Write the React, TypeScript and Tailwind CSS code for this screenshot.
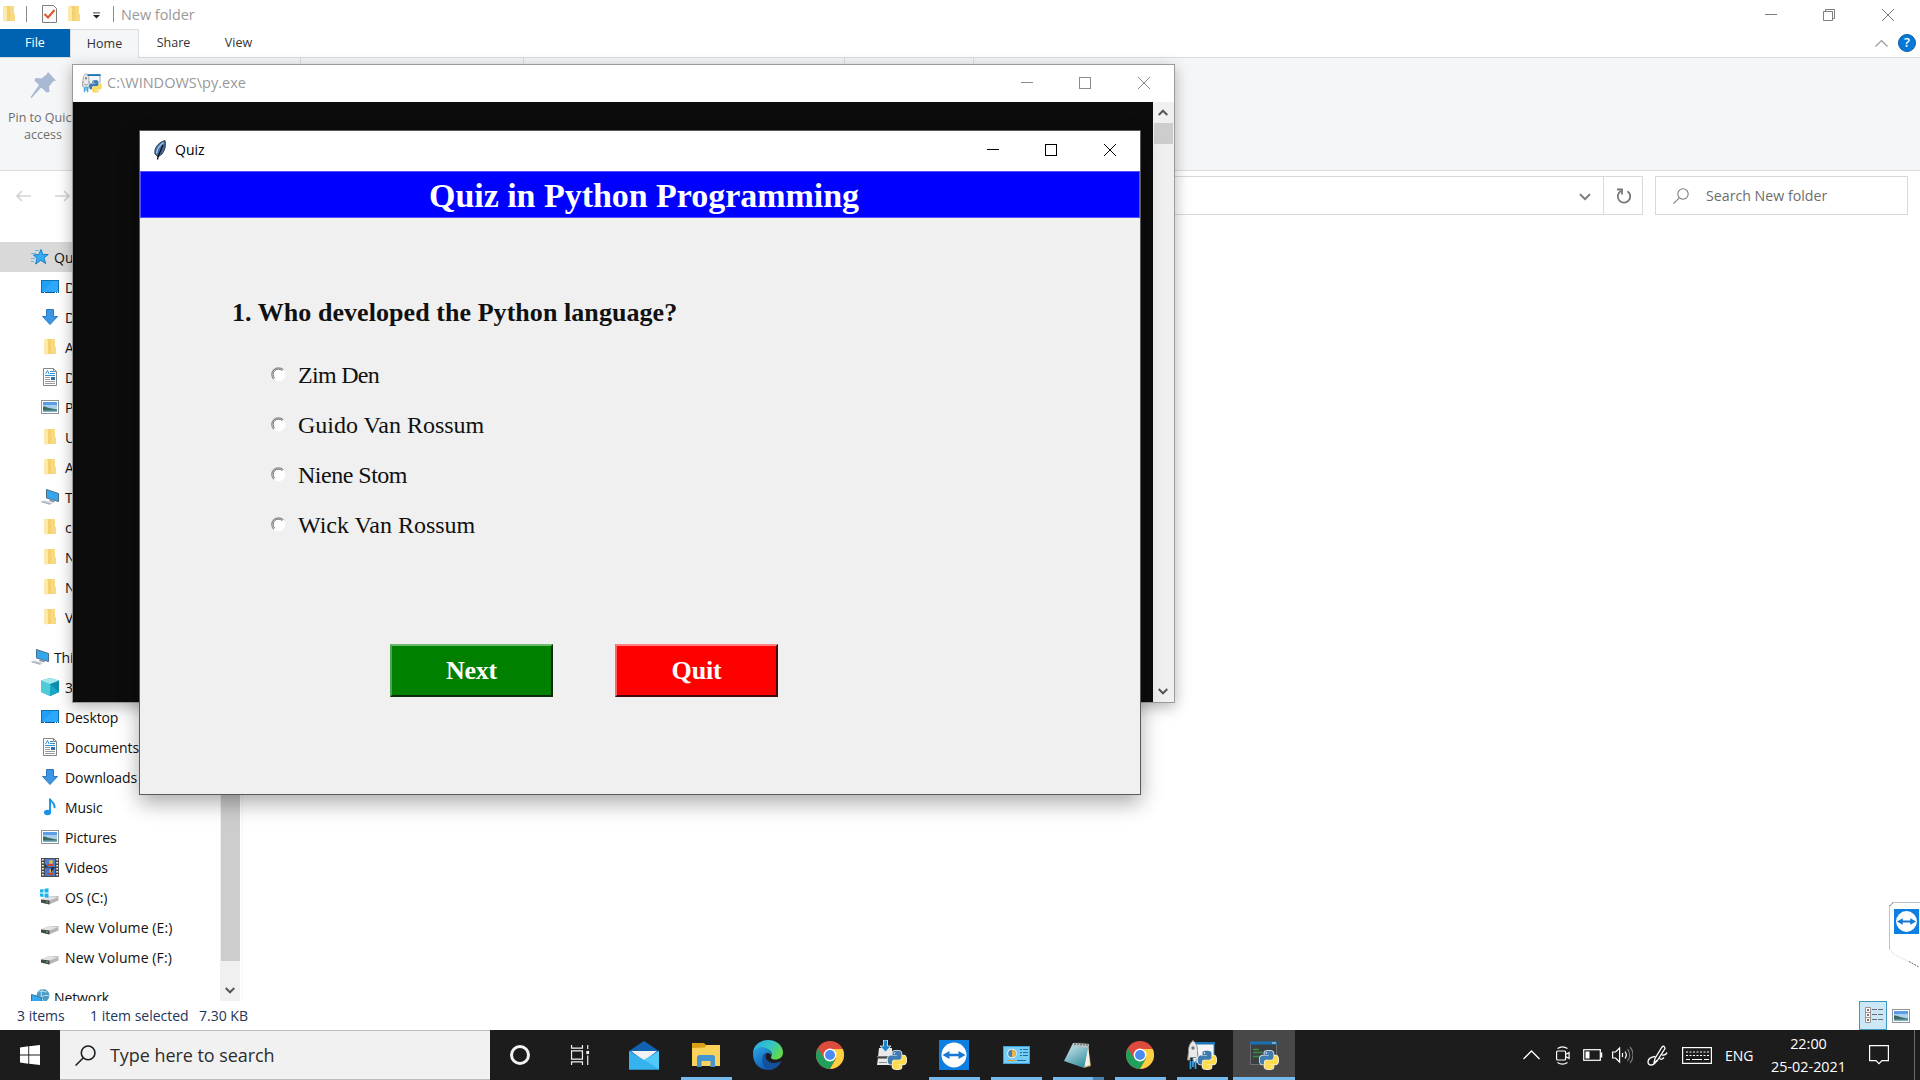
import type { ReactNode } from "react";

/* ---------- shared glyphs ---------- */

const SNAKE =
  "M14.25.18l.9.2.73.26.59.3.45.32.34.34.25.34.16.33.1.3.04.26.02.2-.01.13V8.5l-.05.63-.13.55-.21.46-.26.38-.3.31-.33.25-.35.19-.35.14-.33.1-.3.07-.26.04-.21.02H8.77l-.69.05-.59.14-.5.22-.41.27-.33.32-.27.35-.2.36-.15.37-.1.35-.07.32-.04.27-.02.21v3.06H3.17l-.21-.03-.28-.07-.32-.12-.35-.18-.36-.26-.36-.36-.35-.46-.32-.59-.28-.73-.21-.88-.14-1.05-.05-1.23.06-1.22.16-1.04.24-.87.32-.71.36-.57.4-.44.42-.33.42-.24.4-.16.36-.1.32-.05.24-.01h.16l.06.01h8.16v-.83H6.18l-.01-2.75-.02-.37.05-.34.11-.31.17-.28.25-.26.31-.23.38-.2.44-.18.51-.15.58-.12.64-.1.71-.06.77-.04.84-.02 1.27.05zm-6.3 1.98l-.23.33-.08.41.08.41.23.34.33.22.41.09.41-.09.33-.22.23-.34.08-.41-.08-.41-.23-.33-.33-.22-.41-.09-.41.09z";

/** Python logo meant to be nested in another svg. */
function Snakes({ x, y, size }: { x: number; y: number; size: number }) {
  return (
    <svg x={x} y={y} width={size} height={size} viewBox="-1 -1 26 26">
      <g stroke="#f4f4f4" strokeWidth="2">
        <path d={SNAKE} />
        <path d={SNAKE} transform="rotate(180 12 12)" />
      </g>
      <path d={SNAKE} fill="#3f7cb0" />
      <path d={SNAKE} fill="#ffdc4f" transform="rotate(180 12 12)" />
    </svg>
  );
}

const Folder = () => (
  <svg width="14" height="18" viewBox="0 0 14 18">
    <path d="M4 1h8v8h1v7H4z" fill="#f4d06f" />
    <path d="M8 1h4v8h1v7H8z" fill="#f7d983" />
    <path d="M1 1h3l1 2v12l-2 2-2-1.500z" fill="#fce9ae" />
  </svg>
);
const DesktopIcon = () => (
  <svg width="18" height="14" viewBox="0 0 18 14">
    <rect x=".5" y=".5" width="17" height="12" fill="#1ea0f7" stroke="#1272b0" />
    <path d="M1 12L12 1h5v11z" fill="#3bb0ff" opacity=".5" />
    <path d="M1 12.500h16" stroke="#0b568d" />
    <path d="M3 12.500h1M14 12.500h1M16 12.500h1" stroke="#fff" />
  </svg>
);
const DownloadIcon = () => (
  <svg width="18" height="18" viewBox="0 0 18 18">
    <path d="M5.500 1.500h7v7h4L9 16.500 1.500 8.500h4z" fill="#3d96e4" stroke="#2a78bd" />
  </svg>
);
const DocIcon = () => (
  <svg width="18" height="18" viewBox="0 0 18 18">
    <path d="M2.500.5h10l3 3v14h-13z" fill="#fff" stroke="#858585" />
    <path d="M12.500.5v3h3" fill="none" stroke="#858585" />
    <path d="M4.500 6l2-3.500L8 6M9 3.500h3M9 5.500h5M4 7.500h10" stroke="#2e8fd8" fill="none" />
    <path d="M4 9.500h5M4 11.500h5M4 13.500h10M4 15.500h10" stroke="#9a9a9a" />
    <rect x="10" y="9" width="4" height="3" fill="#2f6fae" />
  </svg>
);
const PicIcon = () => (
  <svg width="18" height="14" viewBox="0 0 18 14">
    <rect x=".5" y=".5" width="17" height="13" fill="#fff" stroke="#8f9499" />
    <rect x="2" y="2" width="14" height="10" fill="#a9cff0" />
    <rect x="2" y="2" width="14" height="3" fill="#5d9de6" />
    <path d="M2 6.500c4 0 5 2 14 3V11H2z" fill="#3c6b62" />
    <path d="M2 10.500h14V12H2z" fill="#7fb0c8" />
  </svg>
);
const PcIcon = () => (
  <svg width="20" height="18" viewBox="0 0 20 18">
    <path d="M6.500 1.500l12 4v8l-12-3.500z" fill="#34a6ee" stroke="#4c6f8a" />
    <path d="M10 11.500l5 1.500-1 1.500-5-1.500z" fill="#8c98a3" />
    <path d="M0 13.500l4-1 9 2.500-3 2z" fill="#c5ccd2" />
    <path d="M2 14l8 2" stroke="#8f9aa3" strokeWidth=".6" />
  </svg>
);
const StarIcon = () => (
  <svg width="18" height="18" viewBox="0 0 18 18">
    <path d="M10 1.500l1.800 5h5.400l-4.300 3.400 1.800 5.600-4.900-3.200L4.600 16l1.400-5.800L2.500 7l5.300-.5z" fill="#33adf3" stroke="#1a7fc4" />
    <path d="M4 2.500h4M0 5.500h5M0 10.500h4M0 13.500h3" stroke="#66b8ee" />
  </svg>
);
const CubeIcon = () => (
  <svg width="18" height="18" viewBox="0 0 18 18">
    <path d="M9 0l9 2.500v11.500L9 18 0 14V2.500z" fill="#22b3cb" />
    <path d="M0 2.500L9 6v12l-9-4z" fill="#4fcbd9" />
    <path d="M9 6l9-3.500V14l-9 4z" fill="#0d8cae" />
    <path d="M9 0l9 2.500L9 6 0 2.500z" fill="#a5e8ec" />
    <path d="M9 6l9 8-9 4z" fill="#1aa7c4" />
  </svg>
);
const MusicIcon = () => (
  <svg width="18" height="18" viewBox="0 0 18 18">
    <ellipse cx="6.500" cy="14.500" rx="3.500" ry="2.800" fill="#1593ea" />
    <path d="M9 14.500V.5c.5 4 5.500 4 4.500 9.500" fill="none" stroke="#1593ea" strokeWidth="1.900" />
  </svg>
);
const VideoIcon = () => (
  <svg width="18" height="19" viewBox="0 0 18 19">
    <rect width="18" height="19" fill="#4a4a4a" />
    <path d="M1.800 1v17M16.200 1v17" stroke="#f1f1f1" strokeWidth="1.800" strokeDasharray="1.600 1.400" />
    <rect x="4" y="1" width="10" height="8" fill="#4f80d4" />
    <rect x="4" y="10" width="10" height="8" fill="#4876c8" />
    <path d="M6 6h7l-1 2H7zM7 15h6l-1 2H8z" fill="#c8472f" />
    <circle cx="10" cy="4" r="2" fill="#e8b93d" />
    <circle cx="10" cy="13" r="1.700" fill="#e8b93d" />
    <path d="M4 6l3 3H4zM14 9l-4 6V9z" fill="#1e2f55" />
  </svg>
);
const DriveIcon = ({ os = false }: { os?: boolean }) => (
  <svg width="20" height="18" viewBox="0 0 20 18">
    <path d="M1 11.500l8-3.500h9.500v4.500L9 16.500l-8-2z" fill="#b4b4b4" />
    <path d="M1 11.500l8-3.500 9.500 1-9 3.500z" fill="#e2e2e2" />
    <path d="M1 11.500l8.500 1v4L1 14.500z" fill="#484848" />
    <rect x="6" y="13.500" width="2" height="1" fill="#4cd264" />
    {os && <path d="M0 1.500l3.500-.5v3.500H0zM4.500.8L8.500.2v4.300h-4zM0 5.500h3.500V9L0 8.500zM4.500 5.500h4v4.300l-4-.6z" fill="#19b4ea" />}
  </svg>
);
const NetIcon = () => (
  <svg width="19" height="18" viewBox="0 0 19 18">
    <circle cx="12" cy="7.500" r="6.500" fill="#4a9cc4" />
    <path d="M8 4c3-2 5 0 8 0M7 8c3 2 7-2 11 0M12 1c-3 4-2 9 1 13" stroke="#c2e4f2" fill="none" />
    <path d="M.5 6.500l10 3v9l-10-2z" fill="#33a8ee" stroke="#3d718f" />
  </svg>
);

const Min = () => (
  <svg width="12" height="12" viewBox="0 0 12 12" stroke="currentColor">
    <path d="M0 5.500h12" />
  </svg>
);
const Max = () => (
  <svg width="12" height="12" viewBox="0 0 12 12" stroke="currentColor" fill="none">
    <rect x=".5" y=".5" width="11" height="11" />
  </svg>
);
const Close = () => (
  <svg width="12" height="12" viewBox="0 0 12 12" stroke="currentColor">
    <path d="M0 0l12 12M12 0L0 12" />
  </svg>
);
const Restore = () => (
  <svg width="12" height="12" viewBox="0 0 12 12" stroke="currentColor" fill="none">
    <path d="M.5 2.500h9v9h-9zM2.500 2.500v-2h9v9h-2" />
  </svg>
);
const Chevron = ({ flip = false }: { flip?: boolean }) => (
  <svg width="10" height="7" viewBox="0 0 10 7" fill="none" stroke="#585858" strokeWidth="2">
    <path d={flip ? "M.7 6L5 1.700 9.300 6" : "M.7 1L5 5.300 9.300 1"} />
  </svg>
);
const Lens = ({ size, color, w }: { size: number; color: string; w: number }) => (
  <svg width={size} height={size} viewBox="0 0 20 20" fill="none" stroke={color} strokeWidth={w}>
    <circle cx="12.500" cy="7.500" r="6.500" />
    <path d="M8 12.200L.6 19.500" />
  </svg>
);

function Launcher({ size }: { size: number }) {
  return (
    <svg width={size} height={size} viewBox="0 0 30 30">
      <rect x="6" y="2.500" width="21" height="20" fill="#f4f6f8" stroke="#4b86b8" />
      <rect x="6" y="2" width="22" height="2.500" fill="#1a76b8" />
      <path d="M6 .5c3.500 3 4.500 6.500 4.500 10v7h-9v-7C1.500 7 2.500 3.500 6 .5z" fill="#e9e9e9" stroke="#8a8a8a" />
      <path d="M1.500 12L.5 20h3M10.500 12l1 8h-3" fill="#ddd" stroke="#8a8a8a" />
      <circle cx="6" cy="8" r="1.700" fill="#777" />
      <path d="M3.500 21v8M6 21v6M8.500 21v8" stroke="#3aa0e0" strokeWidth="1.800" />
      <Snakes x={10} y={10} size={20} />
    </svg>
  );
}

/* ---------- explorer ---------- */

type Row = { label: string; icon: ReactNode; top?: boolean; active?: boolean; gap?: boolean };
const ROWS: Row[] = [
  { label: "Quick access", icon: <StarIcon />, top: true, active: true },
  { label: "Desktop", icon: <DesktopIcon /> },
  { label: "Downloads", icon: <DownloadIcon /> },
  { label: "A", icon: <Folder /> },
  { label: "Documents", icon: <DocIcon /> },
  { label: "Pictures", icon: <PicIcon /> },
  { label: "U", icon: <Folder /> },
  { label: "A", icon: <Folder /> },
  { label: "This PC", icon: <PcIcon /> },
  { label: "c", icon: <Folder /> },
  { label: "N", icon: <Folder /> },
  { label: "N", icon: <Folder /> },
  { label: "V", icon: <Folder /> },
  { label: "This PC", icon: <PcIcon />, top: true, gap: true },
  { label: "3D", icon: <CubeIcon /> },
  { label: "Desktop", icon: <DesktopIcon /> },
  { label: "Documents", icon: <DocIcon /> },
  { label: "Downloads", icon: <DownloadIcon /> },
  { label: "Music", icon: <MusicIcon /> },
  { label: "Pictures", icon: <PicIcon /> },
  { label: "Videos", icon: <VideoIcon /> },
  { label: "OS (C:)", icon: <DriveIcon os /> },
  { label: "New Volume (E:)", icon: <DriveIcon /> },
  { label: "New Volume (F:)", icon: <DriveIcon /> },
  { label: "Network", icon: <NetIcon />, top: true, gap: true },
];

function NavRow({ label, icon, top, active, gap }: Row) {
  return (
    <div
      className={`flex h-[30px] shrink-0 items-center text-[14px] text-[#111] ${top ? "pl-[30px]" : "pl-[40px]"} ${
        active ? "bg-[#d9d9d9]" : ""
      } ${gap ? "mt-[10px]" : ""}`}
    >
      <span className={`flex w-[20px] items-center justify-center ${top ? "mr-[4px]" : "mr-[5px]"}`}>{icon}</span>
      <span className={`whitespace-nowrap ${label.length > 10 ? "tracking-[0.1px]" : "tracking-[-0.1px]"}`}>{label}</span>
    </div>
  );
}

function Explorer() {
  return (
    <div className="flex h-[1030px] flex-col bg-white">
      <div className="flex h-[29px] shrink-0 items-center">
        <div className="flex items-center pl-[2px]">
          <Folder />
          <span className="ml-[10px] h-4 w-px bg-[#8a8a8a]" />
          <svg className="ml-[15px]" width="15" height="18" viewBox="0 0 15 18">
            <path d="M.5.500h11l3 3v14H.5z" fill="#fafafa" stroke="#7e7e7e" />
            <path d="M2.500 9l3.500 3.500L12.500 5" fill="none" stroke="#e0542a" strokeWidth="2" />
          </svg>
          <span className="ml-[10px]">
            <Folder />
          </span>
          <svg className="mt-[3px] ml-[12px]" width="7" height="7" viewBox="0 0 8 7">
            <path d="M0 .5h8" stroke="#222" />
            <path d="M0 3h8L4 7z" fill="#222" />
          </svg>
          <span className="ml-[13px] h-4 w-px bg-[#8a8a8a]" />
          <span className="ml-[7px] text-[14.400px] text-[#999]">New folder</span>
        </div>
        <div className="ml-auto flex items-center text-[#7d7d7d]">
          <Min />
          <span className="ml-[46px]">
            <Restore />
          </span>
          <span className="mr-[26px] ml-[47px]">
            <Close />
          </span>
        </div>
      </div>

      <div className="flex h-[29px] shrink-0 border-b border-[#dadbdc] text-[12.500px] text-[#333]">
        <div className="flex w-[70px] items-center justify-center bg-[#0063b1] pt-px text-white">File</div>
        <div className="-mb-px flex w-[69px] items-center justify-center border border-b-0 border-[#dadbdc] bg-[#f5f6f7]">Home</div>
        <div className="flex w-[69px] items-center justify-center pt-px">Share</div>
        <div className="flex w-[61px] items-center justify-center pt-px">View</div>
        <div className="ml-auto flex items-center pr-[4px]">
          <svg width="13" height="8" viewBox="0 0 13 8" fill="none" stroke="#999" strokeWidth="1.200">
            <path d="M.5 7.500l6-6 6 6" />
          </svg>
          <span className="ml-[10px] flex h-[18px] w-[18px] items-center justify-center rounded-full border border-[#0a5ba8] bg-[#0878d8] text-[13px] font-semibold text-white">
            ?
          </span>
        </div>
      </div>

      <div className="flex h-[113px] shrink-0 border-b border-[#dadbdc] bg-[#f5f6f7]">
        <div className="flex w-[86px] flex-col items-center pt-[13px] text-[12.500px] leading-[17px] text-[#6e6e6e]">
          <svg width="27" height="28" viewBox="0 0 27 28" fill="#aab9d3">
            <path d="M18 1l8 8.500-3 1-4 5 .5 5.500-3 .5-5.300-5L2 26.500.5 27.500 1 25.500 9 14 4.500 9.500l1-2.500 6 .5 5-4z" />
          </svg>
          <span className="mt-[10px] whitespace-nowrap">Pin to Quick</span>
          <span>access</span>
        </div>
        <div className="flex grow">
          <span className="ml-[214px] h-[104px] w-px bg-[#dedfe0]" />
          <span className="ml-[222px] h-[104px] w-px bg-[#dedfe0]" />
          <span className="ml-[320px] h-[104px] w-px bg-[#dedfe0]" />
          <span className="ml-[128px] h-[104px] w-px bg-[#dedfe0]" />
        </div>
      </div>

      <div className="flex h-[71px] shrink-0 pt-[5px]">
        <div className="flex h-[39px] items-center gap-[24px] pl-[16px] text-[#d3d3d3]">
          <svg width="15" height="12" viewBox="0 0 15 12" fill="none" stroke="currentColor" strokeWidth="1.600">
            <path d="M15 6H1M6 1L1 6l5 5" />
          </svg>
          <svg width="15" height="12" viewBox="0 0 15 12" fill="none" stroke="currentColor" strokeWidth="1.600">
            <path d="M0 6h14M9 1l5 5-5 5" />
          </svg>
        </div>
        <div className="ml-[60px] flex h-[39px] grow border border-[#d9d9d9]">
          <div className="flex grow items-center justify-end pt-[2px] pr-[12px]">
            <svg width="12" height="8" viewBox="0 0 12 8" fill="none" stroke="#777" strokeWidth="1.900">
              <path d="M1 1.200l5 5 5-5" />
            </svg>
          </div>
          <div className="flex w-[39px] items-center justify-center border-l border-[#d9d9d9] pt-px pl-px">
            <svg width="16" height="17" viewBox="0 0 16 17" fill="none" stroke="#777" strokeWidth="1.800">
              <path d="M11.500 3.300a6.200 6.200 0 1 1-6.500-.3" />
              <path d="M1 1.500h5v5" />
            </svg>
          </div>
        </div>
        <div className="mr-[12px] ml-[12px] flex h-[39px] w-[253px] items-center border border-[#d9d9d9] pl-[17px] text-[14.200px] text-[#6d6d6d]">
          <Lens size={16} color="#7a7a7a" w={1.3} />
          <span className="ml-[17px]">Search New folder</span>
        </div>
      </div>

      <div className="flex h-[759px] shrink-0">
        <div className="flex h-full w-[220px] flex-col overflow-hidden">
          {ROWS.map((r, i) => (
            <NavRow key={i} {...r} />
          ))}
        </div>
        <div className="flex w-[20px] flex-col items-center bg-[#f0f0f0]">
          <div className="h-[719px] w-[19px] bg-[#cdcdcd]" />
          <div className="flex grow items-end justify-center pb-[7px]">
            <Chevron />
          </div>
        </div>
        <div className="ml-[2px] w-px bg-[#f5f5f5]" />
      </div>

      <div className="flex h-[29px] shrink-0 items-center pl-[17px] text-[14px] text-[#22355c]">
        <span className="w-[73px]">3 items</span>
        <span className="w-[109px]">1 item selected</span>
        <span>7.30 KB</span>
        <div className="ml-auto flex items-center pr-[10px]">
          <div className="flex h-[29px] w-[28px] items-center justify-center border border-[#3f97c0] bg-[#cce8f6] pl-[2px]">
            <svg width="19" height="17" viewBox="0 0 19 17" fill="none">
              <path d="M.5.5h5v15h-5zM.5 5.500h5M.5 10.500h5" fill="#fff" stroke="#9a9191" />
              <path d="M2 3h2M2 8h2M2 13h2" stroke="#6a3b3b" strokeWidth="1.500" />
              <path d="M7 2.500h5M13 2.500h5M7 7.500h5M13 7.500h5M7 12.500h5M13 12.500h5" stroke="#666f75" />
            </svg>
          </div>
          <span className="ml-[5px]">
            <PicIcon />
          </span>
        </div>
      </div>
    </div>
  );
}

/* ---------- floating windows ---------- */

function ConsoleWindow() {
  return (
    <div className="absolute top-[64px] left-[72px] flex h-[639px] w-[1103px] flex-col border border-[#9b9b9b] bg-white shadow-[0_4px_14px_rgba(0,0,0,0.3)]">
      <div className="flex h-[37px] shrink-0 items-center pb-px pl-[9px] text-[14.500px] text-[#999]">
        <Launcher size={20} />
        <span className="ml-[5px]">C:\WINDOWS\py.exe</span>
        <div className="ml-auto flex items-center pr-[24px] text-[#8c8c8c]">
          <Min />
          <span className="ml-[46px]">
            <Max />
          </span>
          <span className="ml-[47px]">
            <Close />
          </span>
        </div>
      </div>
      <div className="flex grow">
        <div className="grow bg-[#0c0c0c]" />
        <div className="flex w-[21px] flex-col items-center bg-[#f0f0f0] pr-px">
          <div className="flex h-[21px] items-center">
            <Chevron flip />
          </div>
          <div className="h-[21px] w-[19px] bg-[#cdcdcd]" />
          <div className="mt-auto flex h-[21px] items-center">
            <Chevron />
          </div>
        </div>
      </div>
    </div>
  );
}

const OPTIONS = [
  { text: "Zim Den", track: "tracking-[-0.7px]" },
  { text: "Guido Van Rossum", track: "tracking-[0px]" },
  { text: "Niene Stom", track: "tracking-[-0.5px]" },
  { text: "Wick Van Rossum", track: "tracking-[0px]" },
];

function QuizWindow() {
  return (
    <div className="absolute top-[130px] left-[139px] flex h-[665px] w-[1002px] flex-col border border-[#5a5a5a] bg-[#f0f0f0] shadow-[0_8px_20px_rgba(0,0,0,0.33)]">
      <div className="flex h-[40px] shrink-0 items-center bg-white pb-[3px] pl-[13px] text-[14px] text-black">
        <svg width="14" height="20" viewBox="0 0 14 20">
          <path d="M12 .5c1 4 .5 9-3 13.500L5 17 2 14C1 9 4 3 12 .5z" fill="#3f6ea6" stroke="#2a3544" strokeWidth=".9" />
          <path d="M10.500 2.500C7 5 4 9 3.500 13.500" stroke="#a9c6e6" fill="none" strokeWidth="1.500" />
          <path d="M10 5L5 17l-.5 2.500" stroke="#111" fill="none" strokeWidth="1.300" />
        </svg>
        <span className="ml-[8px]">Quiz</span>
        <div className="ml-auto flex items-center pr-[24px]">
          <Min />
          <span className="ml-[46px]">
            <Max />
          </span>
          <span className="ml-[47px]">
            <Close />
          </span>
        </div>
      </div>
      <div className="flex h-[47px] shrink-0 items-center justify-center border border-[#5050ff] bg-[#0000ff] pt-[3px] pl-[8px] font-['Liberation_Serif',serif] text-[34px] leading-none font-bold tracking-[-0.04px] text-white">
        Quiz in Python Programming
      </div>
      <div className="flex grow flex-col font-['Liberation_Serif',serif] text-[#111]">
        <div className="mt-[69px] flex h-[51px] items-center pl-[92px] text-[26px] font-bold tracking-[0.06px]">
          1. Who developed the Python language?
        </div>
        <div className="mt-[12px] flex flex-col">
          {OPTIONS.map((o) => (
            <label key={o.text} className="flex h-[50px] items-center pl-[131px] text-[24px]">
              <svg className="mb-[2px]" width="15" height="15" viewBox="0 0 15 15">
                <circle cx="7.500" cy="7.500" r="6.500" fill="#fff" stroke="#fff" />
                <path d="M2.700 12.300A6.500 6.500 0 0 1 12.300 2.900" fill="none" stroke="#8a8a8a" strokeWidth="1.200" />
                <path d="M3.700 11.200A5.300 5.300 0 0 1 11.200 3.700" fill="none" stroke="#6a6a6a" strokeWidth="1" />
              </svg>
              <span className={`ml-[12px] ${o.track}`}>{o.text}</span>
            </label>
          ))}
        </div>
        <div className="mt-[94px] flex gap-[62px] pl-[250px] text-[26px] font-bold tracking-[-0.2px] text-white">
          <div className="flex h-[53px] w-[163px] items-center justify-center border-2 border-t-[#6dba6d] border-r-[#0b2c0b] border-b-[#0b2c0b] border-l-[#4fa44f] bg-[#008000]">
            Next
          </div>
          <div className="flex h-[53px] w-[163px] items-center justify-center border-2 border-t-[#ff8080] border-r-[#450808] border-b-[#450808] border-l-[#ff6565] bg-[#ff0000]">
            Quit
          </div>
        </div>
      </div>
    </div>
  );
}

/* ---------- taskbar ---------- */

const Mail = () => (
  <svg width="30" height="29" viewBox="0 0 30 29">
    <path d="M0 10L15 0l15 10v3H0z" fill="#1162b0" />
    <path d="M2 10h26L15 20z" fill="#f3f3f3" />
    <path d="M0 10l15 9 15-9v18.500H0z" fill="#2ba3e6" />
    <path d="M0 10l30 18.500H0z" fill="#35b3ef" />
    <path d="M30 10L15 19l15 9.500z" fill="#4fcaf8" />
  </svg>
);
const FilesIcon = () => (
  <svg width="28" height="24" viewBox="0 0 28 24">
    <path d="M0 0h12l2 2v4H0z" fill="#dc9f16" />
    <path d="M0 5l13-.5L14 2h14v21H0z" fill="#fbd25c" />
    <path d="M5 23V14.500q0-2.500 2.500-2.500h13q2.500 0 2.500 2.500V24h-4.500v-6h-9v6H5z" fill="#4595d1" />
  </svg>
);
const Edge = () => (
  <svg width="30" height="30" viewBox="0 0 30 30">
    <defs>
      <linearGradient id="edgeTop" x1="0" y1="0" x2="1" y2=".5">
        <stop offset="0" stopColor="#2aa9e8" />
        <stop offset=".6" stopColor="#34c6c4" />
        <stop offset="1" stopColor="#62d84e" />
      </linearGradient>
      <linearGradient id="edgeLeft" x1="0" y1="0" x2=".5" y2="1">
        <stop offset="0" stopColor="#2ba6e2" />
        <stop offset="1" stopColor="#0f5fb8" />
      </linearGradient>
    </defs>
    <path d="M0 14C0 5 7 0 15 0c9 0 15 6 15 12.500 0 4.500-3.500 7-7.500 7-3 0-5-1.200-4.500-2.500C20 14 18 9 12 9 6 9 0 12 0 14z" fill="url(#edgeTop)" />
    <path d="M0 14.500C1 9 6 6.500 11 7.500c5 1 8 4.500 7.500 8.500-.5-1.800-2-3-4-3-3 0-4.500 3-3.500 7 1 5 6 9 8 9.200C8 32 0 24 0 14.500z" fill="url(#edgeLeft)" />
    <path d="M9.500 18c0-3 2-5.500 5-5-2 1-2.500 4-1 6.500 3 4 9 4.500 15 1.500C26 27 20.500 30 16 30 11 29 9 23 9.500 18z" fill="#15509c" />
  </svg>
);
const Chrome = () => (
  <svg width="28" height="28" viewBox="-14 -14 28 28">
    <circle r="14" fill="#dc4b3e" />
    <path d="M-12.120 -7A14 14 0 0 0 0 14L5.900 3.500-5.900 3.500z" fill="#1fa15d" />
    <path d="M12.700 -6A14 14 0 0 1 0 14L6 3.500 3 -6z" fill="#fdcf41" />
    <circle r="6.400" fill="#fff" />
    <circle r="5" fill="#4a8af4" />
  </svg>
);
const PyInstaller = () => (
  <svg width="30" height="30" viewBox="0 0 30 30">
    <path d="M2 8h13v9H1zM1 18h13v7H0z" fill="#e9e9e9" />
    <path d="M1 18.500h12M2 22.500h8" stroke="#8c8c8c" />
    <path d="M0 16h16v1.500H0z" fill="#777" />
    <path d="M6.500 0h4v6h3.500l-5.500 6-5.500-6h3.500z" fill="#1c83c9" stroke="#f3f3f3" strokeWidth=".8" />
    <Snakes x={10} y={10} size={20} />
  </svg>
);
const TeamViewer = ({ size }: { size: number }) => (
  <svg width={size} height={size} viewBox="0 0 30 30">
    <rect width="30" height="30" fill="#0d7fe0" />
    <circle cx="15" cy="15" r="12.500" fill="#fff" />
    <path d="M3.500 15l7-4V13.700h9V11l7 4-7 4v-2.700h-9V19z" fill="#1779d3" />
  </svg>
);
const Monitor = () => (
  <svg width="27" height="18" viewBox="0 0 27 18">
    <rect x=".5" y=".5" width="26" height="17" fill="#76cdf5" stroke="#3aa3dd" />
    <circle cx="9" cy="7.500" r="4.800" fill="#e8f5fc" />
    <circle cx="9" cy="7.500" r="3.800" fill="#3d84b5" />
    <path d="M9 7.500V3.700a3.800 3.800 0 0 1 0 7.600z" fill="#f0b342" />
    <path d="M17 3.500h2M20 3.500h5M17 6.500h2M20 6.500h5M17 9.500h2M20 9.500h5" stroke="#1a6ea8" />
    <path d="M4 14.500h9" stroke="#e99b2f" />
    <path d="M14 14.500h9" stroke="#1a6ea8" />
  </svg>
);
const Notepad = () => (
  <svg width="28" height="28" viewBox="0 0 28 28">
    <defs>
      <linearGradient id="note" x1="0" y1="0" x2=".6" y2="1">
        <stop offset="0" stopColor="#d9eef1" />
        <stop offset="1" stopColor="#3e93a5" />
      </linearGradient>
    </defs>
    <path d="M24 4l3 21-7 2z" fill="#b9a06a" />
    <path d="M24 3l2 21-6 2z" fill="#f3f0e2" />
    <path d="M9 2l16 1-5 24L0 20z" fill="url(#note)" />
    <path d="M10 2l15 1-1 4-16-2z" fill="#b8c2c5" />
    <path d="M11 1v3M14 1v3M17 1.500v3M20 1.500v3M23 2v3" stroke="#555" />
  </svg>
);
const PyConsole = () => (
  <svg width="30" height="30" viewBox="0 0 30 30">
    <rect x="1.500" y="2.500" width="26" height="22" fill="#3a3f42" stroke="#6a6e71" />
    <rect x="1" y="1.500" width="27" height="3" fill="#1a70b5" />
    <path d="M23 3h4" stroke="#cfe3f2" />
    <path d="M4 9.500h6M4 12.500h11M4 16.500h7" stroke="#3f8a40" strokeWidth="1.300" />
    <Snakes x={10} y={10} size={20} />
  </svg>
);

type Task = { icon: ReactNode; open?: boolean; active?: boolean; stacked?: boolean };
const TASKS: Task[] = [
  { icon: <Mail /> },
  { icon: <FilesIcon />, open: true },
  { icon: <Edge /> },
  { icon: <Chrome /> },
  { icon: <PyInstaller /> },
  { icon: <TeamViewer size={30} />, open: true },
  { icon: <Monitor />, open: true },
  { icon: <Notepad />, open: true, stacked: true },
  { icon: <Chrome />, open: true },
  { icon: <Launcher size={30} />, open: true },
  { icon: <PyConsole />, active: true },
];

function Taskbar() {
  return (
    <div className="flex h-[50px] bg-[#1c1c1c] text-white">
      <div className="flex w-[60px] items-center justify-center">
        <svg width="20" height="20" viewBox="0 0 20 20" fill="#fff">
          <path d="M0 2.500l8.300-1.200v8.200H0zM9.200 1.200L20 0v9.500H9.200zM0 10.500h8.300v8.200L0 17.500zM9.200 10.500H20V20L9.200 18.800z" />
        </svg>
      </div>
      <div className="flex w-[430px] items-center border-y border-[#bdbdbd] bg-[#f1f1f1] pl-[15px] text-[18px] text-[#2d2d2d]">
        <Lens size={21} color="#1c1c1c" w={1.5} />
        <span className="ml-[14px] tracking-[-0.06px]">Type here to search</span>
      </div>
      <div className="flex w-[60px] items-center justify-center">
        <span className="h-[20px] w-[20px] rounded-full border-[3px] border-[#f3f3f3]" />
      </div>
      <div className="flex w-[63px] items-center justify-center pr-[3px]">
        <svg width="20" height="20" viewBox="0 0 20 22" fill="none" stroke="#f3f3f3" strokeWidth="1.300">
          <path d="M.7 0v3.500h12V0M.7 6.500h12v9H.7zM.7 22v-3.500h12V22M18.500 0v4.500M18.500 11.500V22" />
          <path d="M18.500 6.500v3.500" strokeWidth="3" />
        </svg>
      </div>
      {TASKS.map((t, i) => (
        <div key={i} className={`flex w-[62px] flex-col items-center ${t.active ? "bg-[#484848]" : ""}`}>
          <div className="flex h-[47px] items-center justify-center pt-[3px]">{t.icon}</div>
          {t.open && (
            <div className="flex h-[3px] w-[51px]">
              <span className="grow bg-[#76b9ed]" />
              {t.stacked && <span className="w-[11px] bg-[#4d7fa8]" />}
            </div>
          )}
          {t.active && <div className="h-[3px] w-full bg-[#76b9ed]" />}
        </div>
      ))}
      <div className="ml-auto flex items-center text-[14px]">
        <svg width="17" height="10" viewBox="0 0 17 10" fill="none" stroke="#fff" strokeWidth="1.300">
          <path d="M.5 9l8-8 8 8" />
        </svg>
        <svg className="ml-[15px]" width="16" height="19" viewBox="0 0 16 19" fill="none" stroke="#fff" strokeWidth="1.200">
          <rect x="1.600" y="5" width="9" height="9" rx="1" />
          <path d="M10.600 8.500l3.500-2v6l-3.500-2M2.500 2.500c3-2 7-2 10 0M2.500 16.500c3 2 7 2 10 0" />
        </svg>
        <svg className="ml-[12px]" width="20" height="12" viewBox="0 0 20 12" fill="none" stroke="#fff">
          <rect x=".7" y=".7" width="16.600" height="10.600" strokeWidth="1.200" />
          <path d="M2.500 2.500h4v7h-4z" fill="#fff" stroke="none" />
          <path d="M18.500 3.500v5" strokeWidth="1.500" />
        </svg>
        <svg className="ml-[9px]" width="21" height="18" viewBox="0 0 21 18" fill="none" stroke="#fff" strokeWidth="1.200">
          <path d="M.6 6h3l4-4v14l-4-4h-3zM10.500 7v4" />
          <path d="M13 5.500c1.500 2 1.500 5 0 7" />
          <path d="M15.500 3c3 3.500 3 8.500 0 12M18 1c4 4.500 4 11.500 0 16" stroke="#777" />
        </svg>
        <svg className="ml-[14px]" width="21" height="21" viewBox="0 0 21 21" fill="none" stroke="#fff" strokeWidth="1.300">
          <path d="M8 13.500L15 2q1.500-1.500 2.500 0t0 2.500L10 16l-3 2z" />
          <path d="M8.500 11.500C4 12 1 14 1 17q0 3 3.500 3c3 0 4-2 5.500-5M12.500 13c1.500 2.500 3 1 4.500-.5M15 10q4 .5 5-2.500" />
        </svg>
        <svg className="ml-[14px]" width="30" height="17" viewBox="0 0 30 17" fill="none" stroke="#fff">
          <rect x=".6" y=".6" width="28.800" height="15.800" strokeWidth="1.200" />
          <path d="M4 5h23M4 8.500h23" strokeDasharray="2 1.500" />
          <path d="M4 12.500h4M10 12.500h10M22 12.500h5" />
        </svg>
        <span className="ml-[13px] w-[29px]">ENG</span>
        <div className="ml-[12px] flex w-[85px] flex-col items-center text-[14.400px] leading-[23px]">
          <span>22:00</span>
          <span>25-02-2021</span>
        </div>
        <svg className="ml-[18px]" width="20" height="20" viewBox="0 0 20 20" fill="none" stroke="#fff" strokeWidth="1.200">
          <path d="M.6.600h18.800v15h-6.400l-3 3-3-3H.6z" />
        </svg>
        <span className="mr-[5px] ml-[25px] h-[50px] w-px bg-[#6a6a6a]" />
      </div>
    </div>
  );
}

function TeamViewerTab() {
  return (
    <div className="absolute top-[902px] left-[1889px] h-[66px] w-[31px] overflow-hidden">
      <svg className="absolute top-0 left-0" width="31" height="66" viewBox="0 0 31 66">
        <path d="M31 .5H4L.5 4v43l4 5L31 65.500" fill="#fff" />
        <path d="M31 .5H4L.5 4v43" fill="none" stroke="#b9c3cc" />
        <path d="M.5 47l4 5L20 60" fill="none" stroke="#dcdcdc" strokeDasharray="2 1" />
        <path d="M.5 4L4 .5M20 59.500l10 5.500" stroke="#6c6c6c" strokeDasharray="2 1" />
      </svg>
      <span className="absolute top-[7px] left-[5px]">
        <TeamViewer size={25} />
      </span>
    </div>
  );
}

export default function App() {
  return (
    <div className="relative h-[1080px] w-[1920px] overflow-hidden bg-white font-['Open_Sans','Noto_Sans',sans-serif]">
      <Explorer />
      <Taskbar />
      <TeamViewerTab />
      <ConsoleWindow />
      <QuizWindow />
    </div>
  );
}
